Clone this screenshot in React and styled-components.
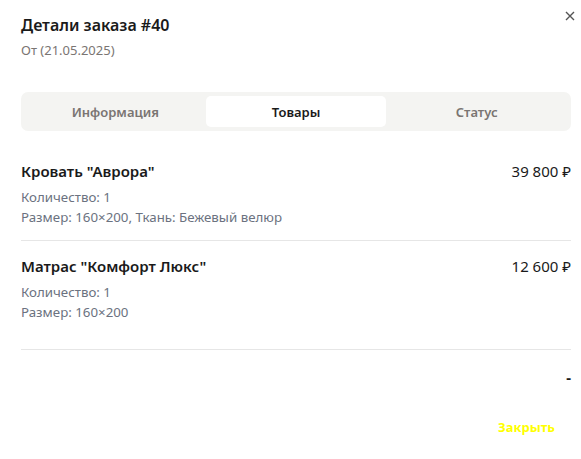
import styled, { createGlobalStyle } from "styled-components";

const GlobalStyle = createGlobalStyle`
  * { box-sizing: border-box; }
  body {
    margin: 0;
    background: #ffffff;
    font-family: "Noto Sans", "Open Sans", Arial, sans-serif;
    color: #1c1c1c;
  }
`;

const Modal = styled.div`
  position: relative;
  width: 581px;
  height: 459px;
  padding: 14px 10px 0 21px;
  background: #ffffff;
`;

const CloseButton = styled.button`
  position: absolute;
  top: 8px;
  right: 3px;
  width: 16px;
  height: 16px;
  padding: 0;
  border: none;
  background: transparent;
  display: flex;
  align-items: center;
  justify-content: center;
  cursor: pointer;
`;

const Header = styled.header`
  display: flex;
  flex-direction: column;
  gap: 5px;
`;

const Title = styled.h2`
  margin: 0;
  font-size: 16px;
  line-height: 22px;
  font-weight: 600;
  color: #1a1a1a;
`;

const Subtitle = styled.p`
  margin: 0;
  font-size: 13px;
  line-height: 18px;
  color: #7a7572;
`;

const Tabs = styled.div`
  margin-top: 33px;
  display: grid;
  grid-template-columns: repeat(3, 1fr);
  padding: 4px;
  background: #f4f4f2;
  border-radius: 7px;
`;

const Tab = styled.button`
  height: 31px;
  border: none;
  border-radius: 5px;
  font-family: inherit;
  font-size: 13px;
  font-weight: 600;
  color: ${({ $active }) => ($active ? "#1a1a1a" : "#7a7572")};
  background: ${({ $active }) => ($active ? "#ffffff" : "transparent")};
  cursor: pointer;
`;

const List = styled.ul`
  list-style: none;
  margin: 15px 0 0;
  padding: 0 0 14px;
  border-bottom: 1px solid #e6e6e6;
`;

const Item = styled.li`
  display: flex;
  justify-content: space-between;
  align-items: flex-start;
  padding: 14px 0 13px;
  & + & {
    border-top: 1px solid #e6e6e6;
  }
`;

const ItemInfo = styled.div`
  display: flex;
  flex-direction: column;
`;

const ItemName = styled.div`
  font-size: 15px;
  line-height: 22px;
  font-weight: 600;
  color: #1a1a1a;
  margin-bottom: 5px;
`;

const Detail = styled.div`
  font-size: 13.3px;
  line-height: 20px;
  color: #6b7280;
`;

const Price = styled.div`
  font-size: 15px;
  line-height: 22px;
  color: #1a1a1a;
`;

const Total = styled.div`
  display: flex;
  justify-content: flex-end;
  padding-top: 16px;
  font-size: 15px;
  line-height: 22px;
  font-weight: 700;
  color: #1a1a1a;
`;

const Footer = styled.div`
  display: flex;
  justify-content: flex-end;
  margin-top: 24px;
`;

const TextButton = styled.button`
  border: none;
  background: transparent;
  padding: 6px 16px;
  font-family: inherit;
  font-size: 13px;
  font-weight: 700;
  color: #ffff00;
  cursor: pointer;
`;

const items = [
  { name: 'Кровать "Аврора"', price: "39 800 ₽", details: ["Количество: 1", "Размер: 160×200, Ткань: Бежевый велюр"] },
  { name: 'Матрас "Комфорт Люкс"', price: "12 600 ₽", details: ["Количество: 1", "Размер: 160×200"] },
];

export default function App() {
  return (
    <>
      <GlobalStyle />
      <Modal>
        <CloseButton aria-label="Закрыть">
          <svg width="10" height="10" viewBox="0 0 10 10">
            <path d="M1 1L9 9M9 1L1 9" stroke="#555" strokeWidth="1.4" />
          </svg>
        </CloseButton>
        <Header>
          <Title>Детали заказа #40</Title>
          <Subtitle>От (21.05.2025)</Subtitle>
        </Header>
        <Tabs>
          <Tab>Информация</Tab>
          <Tab $active>Товары</Tab>
          <Tab>Статус</Tab>
        </Tabs>
        <List>
          {items.map((item) => (
            <Item key={item.name}>
              <ItemInfo>
                <ItemName>{item.name}</ItemName>
                {item.details.map((d) => (
                  <Detail key={d}>{d}</Detail>
                ))}
              </ItemInfo>
              <Price>{item.price}</Price>
            </Item>
          ))}
        </List>
        <Total>-</Total>
        <Footer>
          <TextButton>Закрыть</TextButton>
        </Footer>
      </Modal>
    </>
  );
}
